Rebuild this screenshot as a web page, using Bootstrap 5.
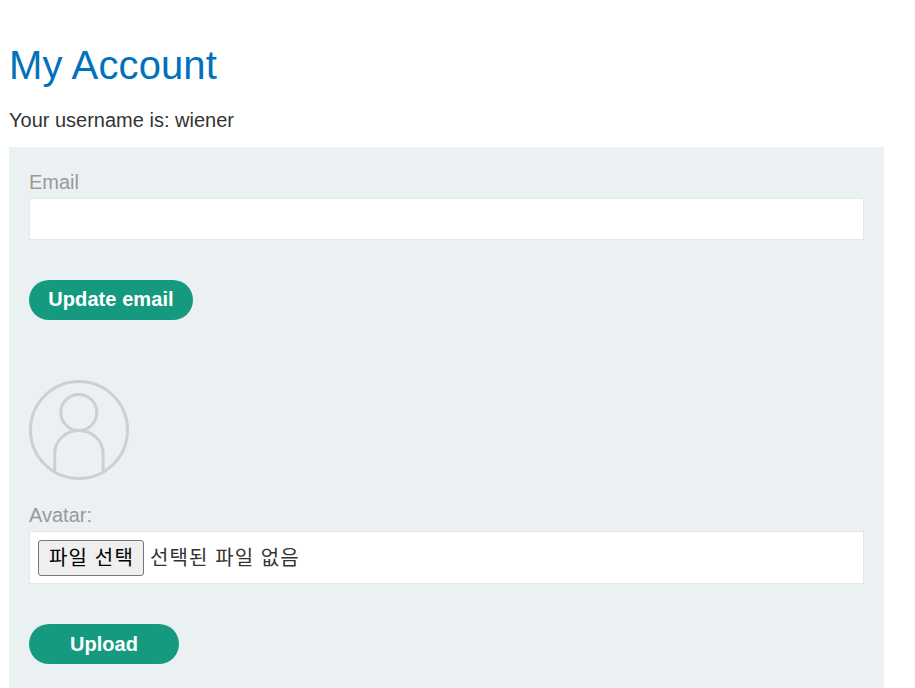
<!DOCTYPE html>
<html lang="ko">
<head>
<meta charset="utf-8">
<title>My Account</title>
<link href="https://cdn.jsdelivr.net/npm/bootstrap@5.3.0/dist/css/bootstrap.min.css" rel="stylesheet">
<style>
html, body { height: 688px; overflow: hidden; }
body { font-family: "Liberation Sans", Arial, sans-serif; font-size: 20px; color: #333332; background: #fff; }
.page-wrap { padding: 42px 31px 0 9px; }
.page-title { font-size: 40px; line-height: 46px; font-weight: 400; color: #0071bc; letter-spacing: .12px; margin: 0 0 21px; }
.user-line { font-size: 20px; line-height: 23px; margin: 0 0 15px; }
.acct-panel { background: #ebf0f2; padding: 24px 20px 40px; }
.field-label { display: block; color: #999; font-size: 20px; line-height: 23px; margin: 0 0 4px; }
.field-input { display: block; width: 100%; height: 42px; background: #fff; border: 1px solid #e6e6e6; border-radius: 0; padding: 0 8px; }
.field-input:focus { outline: 0; box-shadow: none; }
.pill-btn { display: block; height: 40px; border: 0; border-radius: 25px; background: #159a7f; color: #fff; font-weight: 700; font-size: 20px; line-height: 40px; padding: 0; text-align: center; }
.pill-email { width: 164px; margin-top: 40px; padding-bottom: 2px; line-height: 38px; letter-spacing: .08px; }
.pill-upload { width: 150px; margin-top: 40px; }
.avatar-svg { display: block; width: 100px; height: 100px; margin-top: 60px; margin-bottom: 24px; }
.file-box { height: 53px; background: #fff; border: 1px solid #e6e6e6; padding: 8px; gap: 6px; font-family: "Liberation Sans", "Noto Sans CJK KR", sans-serif; }
.file-pick { width: 106px; height: 36px; padding: 0 0 0 1px; background: #efefef; border: 1px solid #767676; border-radius: 3px; color: #000; font-size: 20px; line-height: 34px; letter-spacing: 1.2px; font-family: inherit; }
.file-none { font-size: 20px; line-height: 36px; color: #333332; letter-spacing: 1.1px; }
</style>
</head>
<body>
<div class="page-wrap">
  <h1 class="page-title">My Account</h1>
  <p class="user-line">Your username is: wiener</p>
  <div class="acct-panel">
    <form>
      <label class="field-label" for="email">Email</label>
      <input class="field-input" id="email" type="email">
      <button class="pill-btn pill-email" type="button">Update email</button>
    </form>
    <svg class="avatar-svg" viewBox="0 0 100 100" fill="none" stroke="#cbd0d1" stroke-width="3" aria-hidden="true">
      <circle cx="50" cy="50" r="48.5"/>
      <circle cx="49.8" cy="32.5" r="18"/>
      <path d="M25.7 93 V73.5 A24.2 23 0 0 1 49.9 50.5 A24.2 23 0 0 1 74.1 73.5 V93"/>
    </svg>
    <form>
      <label class="field-label" for="avatar">Avatar:</label>
      <div class="file-box d-flex align-items-center" id="avatar">
        <button class="file-pick flex-shrink-0" type="button">파일 선택</button>
        <span class="file-none">선택된 파일 없음</span>
      </div>
      <button class="pill-btn pill-upload" type="button">Upload</button>
    </form>
  </div>
</div>
</body>
</html>
